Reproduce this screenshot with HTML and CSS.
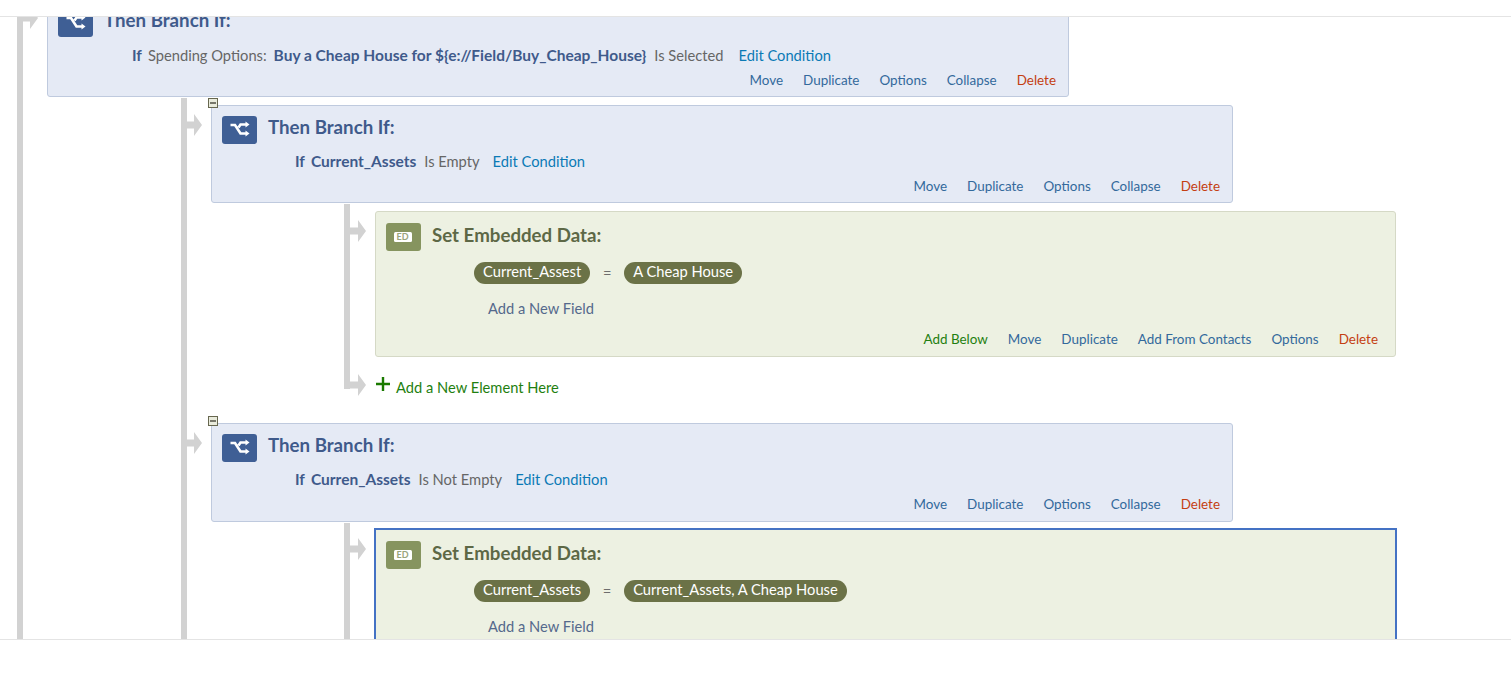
FILE: index.html
```html
<!DOCTYPE html>
<html lang="en">
<head>
<meta charset="utf-8">
<title>Survey Flow</title>
<link rel="stylesheet" href="styles.css">
</head>
<body>
<div class="app">
  <header class="top"></header>
  <main class="canvas">
    <div class="group root">
      <section class="block branch first">
        <svg class="arrow" viewBox="0 0 16 22"><polygon points="0,7.5 8,7.5 8,0 16,11 8,22 8,14.5 0,14.5"/></svg>
        <div class="head">
          <span class="icon"><svg viewBox="0 0 35 28"><path class="s" d="M8.5 9h4.5l5.5 8.5h6M16.5 11.5l2-3h6"/><polygon class="w" points="23.5,5.5 27.5,8.5 23.5,11.5"/><polygon class="w" points="23.5,14.5 27.5,17.5 23.5,20.5"/></svg></span>
          <h2 class="title">Then Branch If:</h2>
        </div>
        <p class="cond"><b>If</b><span>Spending Options:</span><b>Buy a Cheap House for ${e://Field/Buy_Cheap_House}</b><span>Is Selected</span><a class="edit">Edit Condition</a></p>
        <nav class="actions"><a>Move</a><a>Duplicate</a><a>Options</a><a>Collapse</a><a class="del">Delete</a></nav>
      </section>

      <div class="group level2">
        <section class="block branch">
          <span class="minus"></span>
          <svg class="arrow" viewBox="0 0 16 22"><polygon points="0,7.5 8,7.5 8,0 16,11 8,22 8,14.5 0,14.5"/></svg>
          <div class="head">
            <span class="icon"><svg viewBox="0 0 35 28"><path class="s" d="M8.5 9h4.5l5.5 8.5h6M16.5 11.5l2-3h6"/><polygon class="w" points="23.5,5.5 27.5,8.5 23.5,11.5"/><polygon class="w" points="23.5,14.5 27.5,17.5 23.5,20.5"/></svg></span>
            <h2 class="title">Then Branch If:</h2>
          </div>
          <p class="cond"><b>If</b><b>Current_Assets</b><span>Is Empty</span><a class="edit">Edit Condition</a></p>
          <nav class="actions"><a>Move</a><a>Duplicate</a><a>Options</a><a>Collapse</a><a class="del">Delete</a></nav>
        </section>

        <div class="group level3 spaced">
          <section class="block data">
            <svg class="arrow" viewBox="0 0 16 22"><polygon points="0,7.5 8,7.5 8,0 16,11 8,22 8,14.5 0,14.5"/></svg>
            <div class="head">
              <span class="icon"><span class="ed">ED</span></span>
              <h2 class="title">Set Embedded Data:</h2>
            </div>
            <div class="assign"><span class="pill">Current_Assest</span><span class="eq">=</span><span class="pill">A Cheap House</span></div>
            <a class="addfield">Add a New Field</a>
            <nav class="actions"><a class="add">Add Below</a><a>Move</a><a>Duplicate</a><a>Add From Contacts</a><a>Options</a><a class="del">Delete</a></nav>
          </section>
          <div class="addrow">
            <svg class="arrow" viewBox="0 0 16 22"><polygon points="0,7.5 8,7.5 8,0 16,11 8,22 8,14.5 0,14.5"/></svg>
            <svg class="plus" viewBox="0 0 14 14"><path d="M7 0v14M0 7h14"/></svg>
            <a class="addel">Add a New Element Here</a>
          </div>
        </div>

        <section class="block branch tall">
          <span class="minus"></span>
          <svg class="arrow" viewBox="0 0 16 22"><polygon points="0,7.5 8,7.5 8,0 16,11 8,22 8,14.5 0,14.5"/></svg>
          <div class="head">
            <span class="icon"><svg viewBox="0 0 35 28"><path class="s" d="M8.5 9h4.5l5.5 8.5h6M16.5 11.5l2-3h6"/><polygon class="w" points="23.5,5.5 27.5,8.5 23.5,11.5"/><polygon class="w" points="23.5,14.5 27.5,17.5 23.5,20.5"/></svg></span>
            <h2 class="title">Then Branch If:</h2>
          </div>
          <p class="cond"><b>If</b><b>Curren_Assets</b><span>Is Not Empty</span><a class="edit">Edit Condition</a></p>
          <nav class="actions"><a>Move</a><a>Duplicate</a><a>Options</a><a>Collapse</a><a class="del">Delete</a></nav>
        </section>

        <div class="group level3">
          <section class="block data selected">
            <svg class="arrow" viewBox="0 0 16 22"><polygon points="0,7.5 8,7.5 8,0 16,11 8,22 8,14.5 0,14.5"/></svg>
            <div class="head">
              <span class="icon"><span class="ed">ED</span></span>
              <h2 class="title">Set Embedded Data:</h2>
            </div>
            <div class="assign"><span class="pill">Current_Assets</span><span class="eq">=</span><span class="pill">Current_Assets, A Cheap House</span></div>
            <a class="addfield">Add a New Field</a>
            <nav class="actions"><a class="add">Add Below</a><a>Move</a><a>Duplicate</a><a>Add From Contacts</a><a>Options</a><a class="del">Delete</a></nav>
          </section>
        </div>
      </div>
    </div>
  </main>
  <footer class="bottom"></footer>
</div>
</body>
</html>
```
FILE: styles.css
```css
* { box-sizing: border-box; }
html, body { margin: 0; height: 100%; overflow: hidden; background: #fff; }
body { font: 14.7px/20px Lato, Roboto, "Liberation Sans", sans-serif; color: #666; }
.app { display: flex; flex-direction: column; height: 677px; }
.top { flex: 0 0 17px; border-bottom: 1px solid #e4e4e4; background: #fff; }
.canvas { flex: 0 0 622px; overflow: hidden; }
.bottom { flex: 0 0 38px; border-top: 1px solid #e4e4e4; background: #fff; }

.group { border-left: 6px solid #d2d2d2; }
.root { margin: -19px 0 0 17px; padding-left: 24px; }
.level2 { margin: 1px 0 0 134px; padding: 7px 0 0 24px; }
.level3 { margin: 1px 0 0 133px; padding: 7px 0 0 25px; }
.spaced { margin-bottom: 34px; }

.block { position: relative; display: flex; flex-direction: column; border: 1px solid; border-radius: 3px; padding: 10px 12px 6px 10px; }
.branch { width: 1022px; height: 98px; background: #e5eaf5; border-color: #bfcade; }
.first, .tall { height: 99px; }
.tall .actions { margin-bottom: 1px; }
.data { width: 1021px; height: 146px; padding: 11px 17px 7px 10px; background: #edf1e2; border-color: #d5d9c6; }
.selected { width: 1021px; margin-top: -1px; border-radius: 0; outline: 2px solid #4472c4; outline-offset: -1px; }

.arrow { position: absolute; left: -26px; top: 8px; width: 16px; height: 22px; }
.arrow polygon { fill: #d2d2d2; }

.minus { position: absolute; left: -4px; top: -8px; width: 10px; height: 10px; border: 1px solid #67674f; background: #e9ebdc; display: flex; align-items: center; justify-content: center; }
.minus::after { content: ""; width: 6px; height: 2px; background: #77776a; }

.head { display: flex; align-items: flex-start; gap: 11px; height: 28px; flex: none; }
.icon { flex: none; width: 35px; height: 28px; border-radius: 3px; display: flex; align-items: center; justify-content: center; }
.branch .icon { background: #3f5f95; }
.data .icon { background: #86945f; }
.icon svg { width: 35px; height: 28px; display: block; }
.s { fill: none; stroke: #fff; stroke-width: 2.6; }
.w { fill: #fff; }
.ed { width: 18px; height: 10px; margin-right: 2px; border-radius: 1.5px; background: #fff; color: #99a47c; font-size: 9px; font-weight: 700; line-height: 10px; text-align: center; }

.title { margin: 0; font-size: 18.7px; line-height: 24px; font-weight: 700; }
.branch .title { color: #3f5a8b; margin-top: -1px; }
.data .title { color: #5d6846; }

.cond { margin: 7px 0 0 73px; height: 20px; display: flex; gap: 6px; white-space: nowrap; }
.first .cond { margin: 8px 0 0 74px; }
.cond b { color: #3f5a8b; font-weight: 700; font-size: 15.5px; }
.cond b + span { margin-left: 2px; }
.cond b:first-child + span { margin-left: 0; }
.cond span + b { margin-left: 1px; }
.cond .edit { margin-left: 7px; color: #0b7ab5; }
.first .cond .edit { margin-left: 9px; }

.actions { margin-top: auto; height: 20px; flex: none; display: flex; justify-content: flex-end; gap: 20px; color: #33699c; white-space: nowrap; font-size: 13.45px; }
.actions .del { color: #c43e12; }
.actions .add { color: #1f7f10; }

.assign { margin: 11px 0 0 88px; display: flex; align-items: center; height: 22px; flex: none; }
.pill { height: 22px; line-height: 19px; padding: 0 9px; border-radius: 11px; background: #6b7247; color: #fff; white-space: nowrap; }
.eq { width: 34px; text-align: center; color: #6d6d6d; }
.addfield { margin: 14px 0 0 102px; height: 20px; flex: none; color: #55698c; }

.addrow { position: relative; height: 32px; display: flex; align-items: flex-start; }
.addrow .arrow { left: -25px; top: 17px; }
.plus { width: 14px; height: 14px; margin: 20px 0 0 1px; flex: none; }
.plus path { fill: none; stroke: #1a7a00; stroke-width: 2.4; }
.addel { margin: 20px 0 0 6px; color: #1f7f10; }
```
